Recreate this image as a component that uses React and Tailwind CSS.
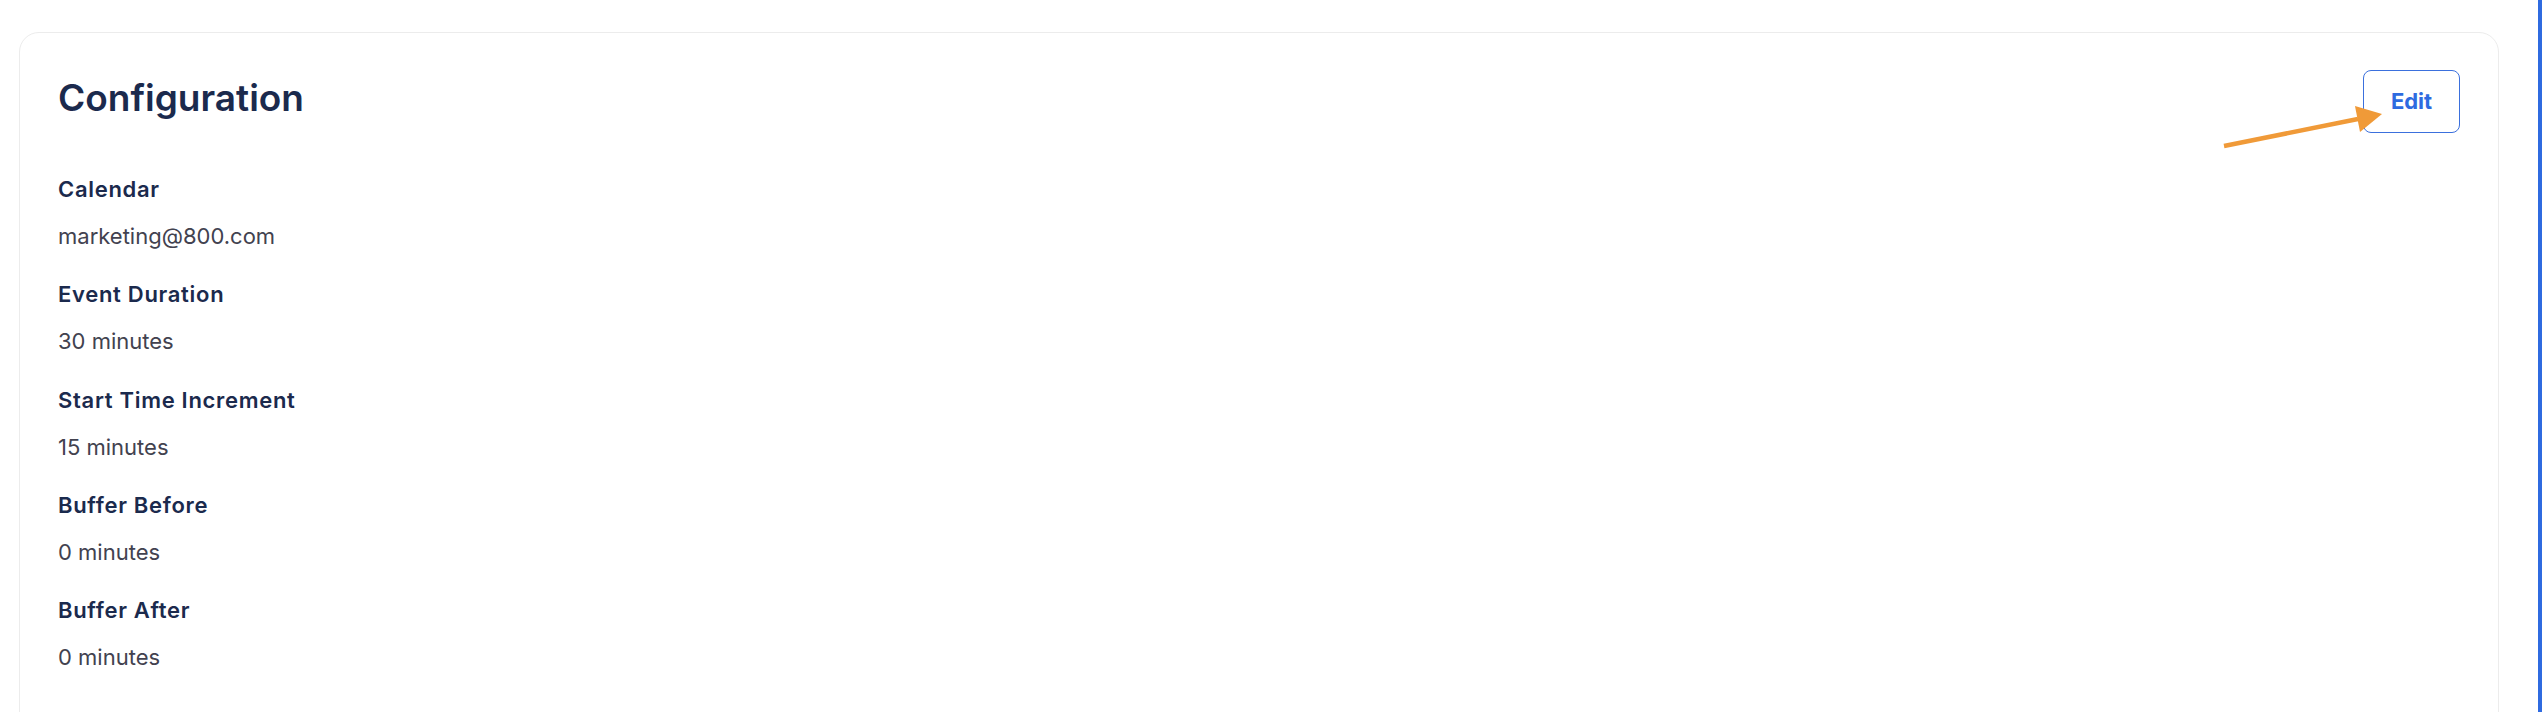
const items = [
  { label: 'Calendar', value: 'marketing@800.com' },
  { label: 'Event Duration', value: '30 minutes' },
  { label: 'Start Time Increment', value: '15 minutes' },
  { label: 'Buffer Before', value: '0 minutes' },
  { label: 'Buffer After', value: '0 minutes' },
];

export default function App() {
  return (
    <div className="relative flex h-[712px] overflow-hidden bg-white font-['Inter','Liberation_Sans',sans-serif]">
      <div className="flex-1 pl-[19px] pr-[39px] pt-[32px]">
        <section className="rounded-[20px] border border-[#ececec] px-[38px] pt-[37px] pb-[80px]">
          <div className="flex items-start justify-between">
            <h2 className="mt-[5px] text-[37px] leading-[46px] font-semibold text-[#1b2a4d]">Configuration</h2>
            <button className="flex h-[63px] w-[97px] items-center justify-center rounded-[8px] border border-[#3b70dd] text-[22px] font-bold text-[#2e6be0]">
              Edit
            </button>
          </div>
          <dl className="mt-[40px] flex flex-col gap-[26.25px]">
            {items.map((it) => (
              <div key={it.label} className="flex flex-col gap-[15px]">
                <dt className="text-[22px] leading-[32px] font-semibold tracking-[0.7px] text-[#1b2a4d]">{it.label}</dt>
                <dd className="text-[22px] leading-[32px] text-[#42424f]">{it.value}</dd>
              </div>
            ))}
          </dl>
        </section>
      </div>
      <div className="w-[4px] bg-[#2f6be0]" />
      <svg className="absolute left-[2220px] top-[100px]" width="170" height="50" viewBox="0 0 170 50">
        <line x1="4" y1="46" x2="138" y2="19" stroke="#f09a38" strokeWidth="4.5" />
        <polygon points="162,14 135,6 140,32" fill="#f09a38" />
      </svg>
    </div>
  );
}
